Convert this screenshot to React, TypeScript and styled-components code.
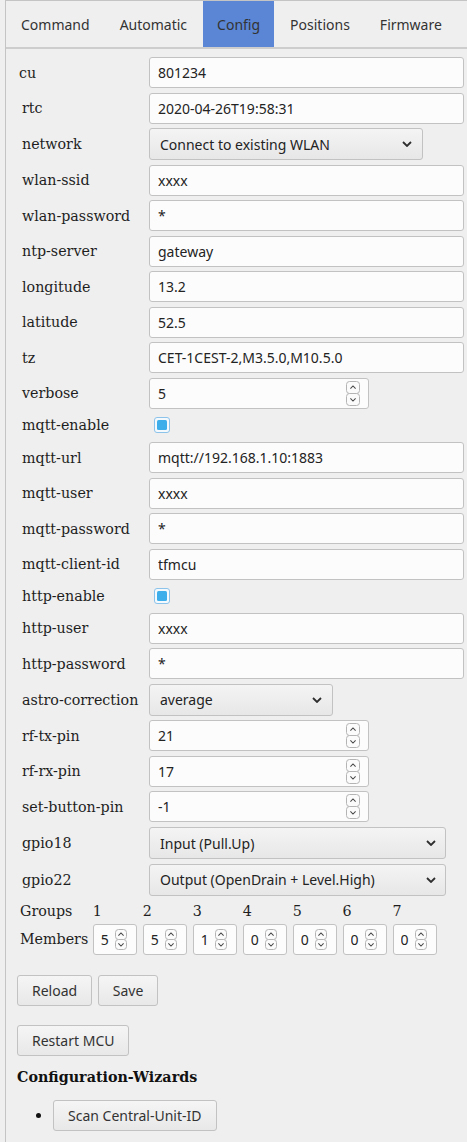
import React from "react";
import styled, { createGlobalStyle } from "styled-components";

const Global = createGlobalStyle`
  html, body { margin: 0; padding: 0; background: #efefef; }
  body { font-family: "Noto Sans", "Open Sans", sans-serif; color: #222; }
  * { box-sizing: border-box; }
`;

const Frame = styled.div`
  margin-left: 5px;
  border-left: 1px solid #c4c4c4;
  border-top: 1px solid #c4c4c4;
  min-height: 1142px;
`;

const TabBar = styled.div`
  display: flex;
  gap: 2px;
  height: 48px;
  padding-left: 1px;
  border-bottom: 2px solid #cdcdcd;
`;

const Tab = styled.div<{ $active?: boolean }>`
  display: flex;
  align-items: center;
  height: 46px;
  padding: 0 14px;
  font-size: 14px;
  color: #333;
  background: ${(p) => (p.$active ? "#5b86d5" : "transparent")};
`;

const Panel = styled.div`
  padding: 8px 0 0 11px;
`;

const FormGrid = styled.div`
  display: grid;
  grid-template-columns: 127px 1fr;
  row-gap: 4.55px;
  margin-left: 5px;
`;

const Label = styled.div<{ $shift?: number }>`
  font-family: "DejaVu Serif", serif;
  font-size: 14.25px;
  color: #1e1e1e;
  align-self: center;
  margin-left: ${(p) => p.$shift ?? 0}px;
  white-space: nowrap;
`;

const TextInput = styled.input<{ $w: number }>`
  width: ${(p) => p.$w}px;
  height: 31px;
  border: 1px solid #c2c2c2;
  border-radius: 3px;
  background: #fcfcfc;
  padding: 0 8px;
  font-family: "Noto Sans", sans-serif;
  font-size: 14px;
  color: #232323;
  outline: none;
`;

const NumberBox = styled.div<{ $w: number; $pl: number; $pr: number }>`
  display: flex;
  align-items: center;
  width: ${(p) => p.$w}px;
  height: 31px;
  border: 1px solid #c2c2c2;
  border-radius: 3px;
  background: #fcfcfc;
  padding: 0 ${(p) => p.$pr}px 0 ${(p) => p.$pl}px;
`;

const NumberField = styled.input`
  flex: 1;
  min-width: 0;
  border: none;
  background: transparent;
  padding: 0;
  font-family: "Noto Sans", sans-serif;
  font-size: 14px;
  color: #232323;
  outline: none;
`;

const SelectWrap = styled.div<{ $w: number }>`
  position: relative;
  width: ${(p) => p.$w}px;
  height: 32px;
`;

const Select = styled.select`
  appearance: none;
  width: 100%;
  height: 32px;
  border: 1px solid #c2c2c2;
  border-radius: 3px;
  background: linear-gradient(#f4f4f4, #e7e7e7);
  padding: 0 30px 0 10px;
  font-family: "Noto Sans", sans-serif;
  font-size: 14px;
  color: #232323;
  outline: none;
`;

const Chevron = styled.svg<{ $right: number }>`
  position: absolute;
  right: ${(p) => p.$right}px;
  top: 13px;
  pointer-events: none;
`;

const CheckCell = styled.div`
  height: 24px;
  display: flex;
  align-items: center;
  padding-left: 5px;
`;

const CheckBox = styled.span`
  width: 16px;
  height: 16px;
  border: 1px solid #8cc3ea;
  border-radius: 3px;
  background: #f4f9fd;
  padding: 2px;
  display: flex;
`;

const CheckFill = styled.span`
  flex: 1;
  background: #3daee9;
  border-radius: 1.5px;
`;

const GroupsGrid = styled.div`
  display: grid;
  grid-template-columns: 67px repeat(7, 44.3px);
  column-gap: 5.7px;
  grid-template-rows: 22px 31px;
  row-gap: 2px;
  margin: 4px 0 0 3px;
`;

const GroupsLabel = styled.div`
  font-family: "DejaVu Serif", serif;
  font-size: 14.25px;
  color: #1e1e1e;
  align-self: center;
  white-space: nowrap;
`;

const ButtonRow = styled.div<{ $mt: number }>`
  display: flex;
  gap: 5.6px;
  margin-top: ${(p) => p.$mt}px;
`;

const Button = styled.button`
  height: 31px;
  padding: 0 14px;
  border: 1px solid #c2c2c2;
  border-radius: 3px;
  background: linear-gradient(#f5f5f5, #e8e8e8);
  font-family: "Noto Sans", sans-serif;
  font-size: 14px;
  color: #333;
`;

const Heading = styled.h4`
  margin: 12px 0 0 0;
  font-family: "DejaVu Serif", serif;
  font-size: 14.3px;
  font-weight: bold;
  color: #111;
  line-height: 18px;
`;

const WizardList = styled.ul`
  margin: 14px 0 0 0;
  padding-left: 36px;
  list-style: disc;
`;

const WizardItem = styled.li`
  font-size: 14px;
  &::marker { color: #111; }
`;

function Spinner({ w, h }: { w: number; h: number }) {
  const half = h / 2;
  const cx = w / 2;
  return (
    <svg width={w} height={h} viewBox={`0 0 ${w} ${h}`}>
      <rect x={0.5} y={0.5} width={w - 1} height={half - 0.5} rx={3} fill="#fbfbfb" stroke="#b4b4b4" />
      <rect x={0.5} y={half} width={w - 1} height={half - 0.5} rx={3} fill="#fbfbfb" stroke="#b4b4b4" />
      <path
        d={`M${cx - 2.6} ${half / 2 + 1.3} L${cx} ${half / 2 - 1.3} L${cx + 2.6} ${half / 2 + 1.3}`}
        fill="none"
        stroke="#4a4a4a"
        strokeWidth={1.1}
      />
      <path
        d={`M${cx - 2.6} ${half + half / 2 - 1.3} L${cx} ${half + half / 2 + 1.3} L${cx + 2.6} ${half + half / 2 - 1.3}`}
        fill="none"
        stroke="#4a4a4a"
        strokeWidth={1.1}
      />
    </svg>
  );
}

type Row =
  | { kind: "text"; label: string; value: string; w?: number; shift?: number }
  | { kind: "number"; label: string; value: string }
  | { kind: "select"; label: string; value: string; w: number; right: number }
  | { kind: "check"; label: string };

const rows: Row[] = [
  { kind: "text", label: "cu", value: "801234", shift: -3 },
  { kind: "text", label: "rtc", value: "2020-04-26T19:58:31" },
  { kind: "select", label: "network", value: "Connect to existing WLAN", w: 274, right: 11 },
  { kind: "text", label: "wlan-ssid", value: "xxxx" },
  { kind: "text", label: "wlan-password", value: "*" },
  { kind: "text", label: "ntp-server", value: "gateway" },
  { kind: "text", label: "longitude", value: "13.2" },
  { kind: "text", label: "latitude", value: "52.5" },
  { kind: "text", label: "tz", value: "CET-1CEST-2,M3.5.0,M10.5.0" },
  { kind: "number", label: "verbose", value: "5" },
  { kind: "check", label: "mqtt-enable" },
  { kind: "text", label: "mqtt-url", value: "mqtt://192.168.1.10:1883" },
  { kind: "text", label: "mqtt-user", value: "xxxx" },
  { kind: "text", label: "mqtt-password", value: "*" },
  { kind: "text", label: "mqtt-client-id", value: "tfmcu" },
  { kind: "check", label: "http-enable" },
  { kind: "text", label: "http-user", value: "xxxx" },
  { kind: "text", label: "http-password", value: "*" },
  { kind: "select", label: "astro-correction", value: "average", w: 184, right: 11 },
  { kind: "number", label: "rf-tx-pin", value: "21" },
  { kind: "number", label: "rf-rx-pin", value: "17" },
  { kind: "number", label: "set-button-pin", value: "-1" },
  { kind: "select", label: "gpio18", value: "Input (Pull.Up)", w: 297, right: 10 },
  { kind: "select", label: "gpio22", value: "Output (OpenDrain + Level.High)", w: 297, right: 10 },
];

const members = ["5", "5", "1", "0", "0", "0", "0"];

function Control({ row }: { row: Row }) {
  switch (row.kind) {
    case "text":
      return <TextInput $w={row.w ?? 315} defaultValue={row.value} />;
    case "number":
      return (
        <NumberBox $w={220} $pl={8} $pr={8}>
          <NumberField defaultValue={row.value} />
          <Spinner w={14} h={25} />
        </NumberBox>
      );
    case "select":
      return (
        <SelectWrap $w={row.w}>
          <Select defaultValue={row.value}>
            <option>{row.value}</option>
          </Select>
          <Chevron $right={row.right} width="10" height="6" viewBox="0 0 10 6">
            <path d="M1 1 L5 5 L9 1" fill="none" stroke="#2e2e2e" strokeWidth="1.8" />
          </Chevron>
        </SelectWrap>
      );
    case "check":
      return (
        <CheckCell>
          <CheckBox>
            <CheckFill />
          </CheckBox>
        </CheckCell>
      );
  }
}

export default function App() {
  return (
    <>
      <Global />
      <Frame>
        <TabBar>
          {["Command", "Automatic", "Config", "Positions", "Firmware"].map((t) => (
            <Tab key={t} $active={t === "Config"}>
              {t}
            </Tab>
          ))}
        </TabBar>
        <Panel>
          <FormGrid>
            {rows.map((r) => (
              <React.Fragment key={r.label}>
                <Label $shift={"shift" in r ? r.shift : 0}>{r.label}</Label>
                <Control row={r} />
              </React.Fragment>
            ))}
          </FormGrid>
          <GroupsGrid>
            <GroupsLabel>Groups</GroupsLabel>
            {members.map((_, i) => (
              <GroupsLabel key={"g" + i}>{i + 1}</GroupsLabel>
            ))}
            <GroupsLabel>Members</GroupsLabel>
            {members.map((m, i) => (
              <NumberBox key={"m" + i} $w={44.3} $pl={7} $pr={9}>
                <NumberField defaultValue={m} />
                <Spinner w={12} h={21} />
              </NumberBox>
            ))}
          </GroupsGrid>
          <ButtonRow $mt={20.7}>
            <Button>Reload</Button>
            <Button>Save</Button>
          </ButtonRow>
          <ButtonRow $mt={18.3}>
            <Button>Restart MCU</Button>
          </ButtonRow>
          <Heading>Configuration-Wizards</Heading>
          <WizardList>
            <WizardItem>
              <Button>Scan Central-Unit-ID</Button>
            </WizardItem>
          </WizardList>
        </Panel>
      </Frame>
    </>
  );
}
